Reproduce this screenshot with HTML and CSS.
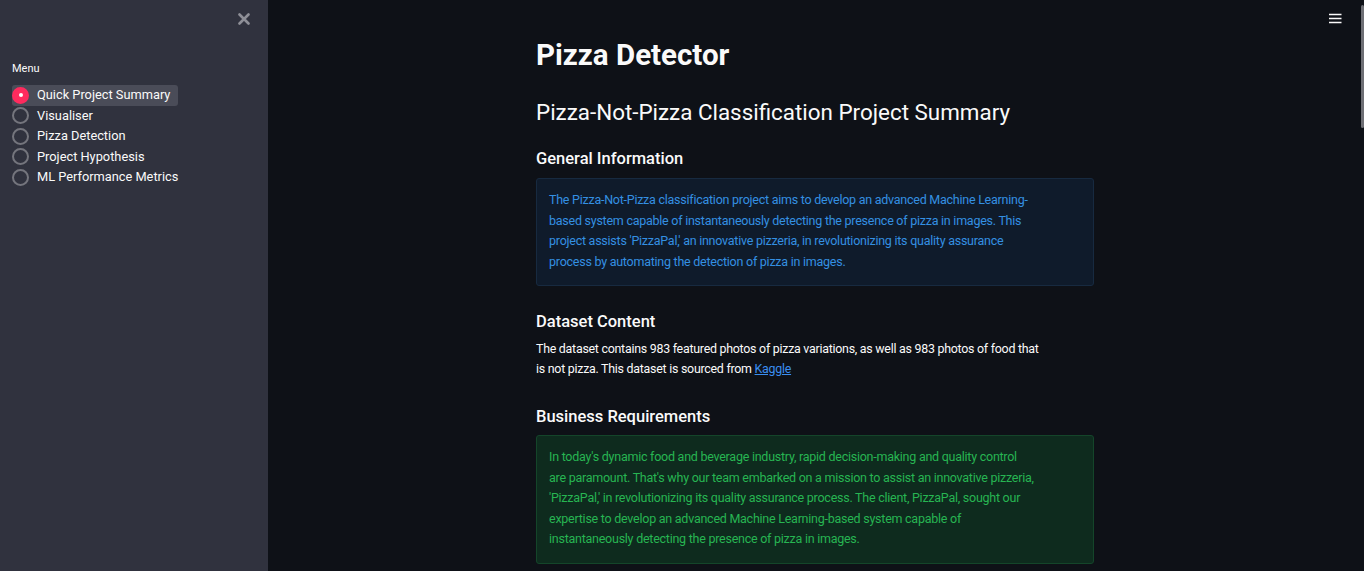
FILE: index.html
```html
<!DOCTYPE html>
<html>
<head>
<meta charset="utf-8">
<link rel="stylesheet" href="styles.css">
</head>
<body>
<div class="app">
  <aside class="sidebar">
    <div class="sb-top">
      <button class="close" aria-label="Close">
        <svg width="12" height="12" viewBox="0 0 12 12"><path d="M1.5 1.5 L10.5 10.5 M10.5 1.5 L1.5 10.5" stroke="#8e8f97" stroke-width="2.6" stroke-linecap="round"/></svg>
      </button>
    </div>
    <div class="menu-label">Menu</div>
    <ul class="radios">
      <li class="radio selected"><span class="dot"></span><span class="lbl">Quick Project Summary</span></li>
      <li class="radio"><span class="dot"></span><span class="lbl">Visualiser</span></li>
      <li class="radio"><span class="dot"></span><span class="lbl">Pizza Detection</span></li>
      <li class="radio"><span class="dot"></span><span class="lbl">Project Hypothesis</span></li>
      <li class="radio"><span class="dot"></span><span class="lbl">ML Performance Metrics</span></li>
    </ul>
  </aside>
  <main class="main">
    <div class="content">
      <h1 class="title">Pizza Detector</h1>
      <h2 class="subheader">Pizza-Not-Pizza Classification Project Summary</h2>
      <h3 class="section">General Information</h3>
      <div class="alert info"><div class="alert-text">The Pizza-Not-Pizza classification project aims to develop an advanced Machine Learning-based system capable of instantaneously detecting the presence of pizza in images. This project assists 'PizzaPal,' an innovative pizzeria, in revolutionizing its quality assurance process by automating the detection of pizza in images.</div></div>
      <h3 class="section gap">Dataset Content</h3>
      <p class="para">The dataset contains 983 featured photos of pizza variations, as well as 983 photos of food that is not pizza. This dataset is sourced from <a href="#">Kaggle</a></p>
      <h3 class="section gap2">Business Requirements</h3>
      <div class="alert success"><div class="alert-text">In today's dynamic food and beverage industry, rapid decision-making and quality control are paramount. That's why our team embarked on a mission to assist an innovative pizzeria, 'PizzaPal,' in revolutionizing its quality assurance process. The client, PizzaPal, sought our expertise to develop an advanced Machine Learning-based system capable of instantaneously detecting the presence of pizza in images.</div></div>
    </div>
    <button class="hamburger" aria-label="Menu">
      <svg width="13" height="11" viewBox="0 0 13 11"><path d="M0 1.5H12.5M0 5.5H12.5M0 9.5H12.5" stroke="#fafafa" stroke-width="1.4"/></svg>
    </button>
    <div class="scrollbar"></div>
  </main>
</div>
</body>
</html>
```
FILE: styles.css
```css
* { box-sizing: border-box; }
html, body { margin: 0; padding: 0; height: 100%; }
body {
  background: #0e1117;
  color: #fafafa;
  font-family: "Roboto", "Noto Sans", sans-serif;
  font-size: 12.8px;
  overflow: hidden;
}
.app { display: flex; height: 571px; }
.sidebar {
  width: 268px;
  flex: 0 0 268px;
  background: #30323e;
  padding: 0 12px;
}
.sb-top { display: flex; justify-content: flex-end; padding: 13px 6px 0 0; height: 60px; }
.close { background: none; border: 0; padding: 0; width: 12px; height: 12px; display: flex; }
.menu-label { font-size: 11px; line-height: 16px; color: #fafafa; margin-top: 1px; }
.radios { list-style: none; margin: 8px 0 0; padding: 0; display: flex; flex-direction: column; align-items: flex-start; }
.radio { display: flex; align-items: center; height: 20.5px; padding: 0 8px 0 0; border-radius: 3px; }
.radio.selected { background: #4a4c58; }
.dot {
  width: 17px; height: 17px; border-radius: 50%;
  border: 2px solid #74757d;
  margin: 0 8px 0 0;
  flex: 0 0 auto;
}
.radio.selected .dot { background: #ff2b5e; border-color: #ff2b5e; position: relative; }
.radio.selected .dot::after {
  content: ""; position: absolute; left: 4.5px; top: 4.5px; width: 4px; height: 4px; border-radius: 50%; background: #fff;
}
.lbl { font-size: 12.8px; line-height: 20px; color: #fafafa; }
.main { flex: 1; position: relative; display: flex; justify-content: center; padding-right: 2px; }
.content { width: 558px; padding-top: 36px; }
.title { font-size: 29.5px; font-weight: 700; line-height: 38px; margin: 0; }
.subheader { font-size: 22.4px; font-weight: 400; line-height: 30px; margin: 23px 0 0; }
.section { font-size: 16.5px; font-weight: 500; line-height: 22px; margin: 21px 0 8px; }
.section.gap { margin-top: 25px; margin-bottom: 6px; }
.section.gap2 { margin-top: 27px; margin-bottom: 7px; }
.alert {
  border-radius: 3px;
  padding: 11px 12px 13px;
  line-height: 20.5px;
  font-size: 12.5px;
  letter-spacing: -0.25px;
}
.alert-text { max-width: 487px; }
.info { background: #0f1b2b; border: 1px solid #172a40; color: #3490e2; }
.success { background: #0e2b1e; border: 1px solid #14452a; color: #27b552; }
.para { margin: 0; line-height: 20px; font-size: 12.4px; letter-spacing: -0.25px; max-width: 508px; }
.para a { color: #3a8ef0; }
.hamburger { position: absolute; top: 13px; right: 22px; background: none; border: 0; padding: 0; display: flex; }
.scrollbar { position: absolute; right: 0; top: 5px; width: 3px; height: 123px; background: #6e6f75; border-radius: 2px; }
```
